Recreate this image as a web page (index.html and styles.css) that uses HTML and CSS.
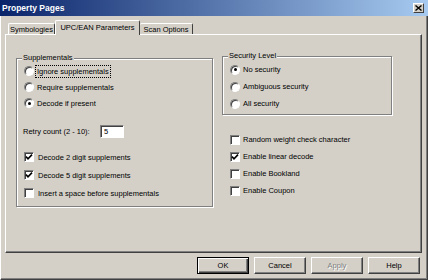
FILE: index.html
```html
<!DOCTYPE html>
<html lang="en">
<head>
    <meta charset="UTF-8">
    <title>Property Pages</title>
    <link rel="stylesheet" href="styles.css">
</head>
<body>
    <div class="window">
        <div class="titlebar">
            <span class="title">Property Pages</span>
            <span class="close-btn">
                <svg width="7" height="6" viewBox="0 0 7 6">
                    <path d="M0.5 0.5 L6.5 5.5 M6.5 0.5 L0.5 5.5" stroke="#000" stroke-width="1.4" fill="none"/>
                </svg>
            </span>
        </div>
        <div class="dialog">
            <div class="tabs">
                <div class="tab tab-symb">Symbologies</div>
                <div class="tab tab-upc active">UPC/EAN Parameters</div>
                <div class="tab tab-scan">Scan Options</div>
            </div>
            <div class="panel">
                <div class="col col-left">
                    <fieldset class="group group-supp">
                        <legend>Supplementals</legend>
                        <div class="row radio-row"><span class="radio"></span><span class="text focus">Ignore supplementals</span></div>
                        <div class="row radio-row"><span class="radio"></span><span class="text">Require supplementals</span></div>
                        <div class="row radio-row"><span class="radio on"></span><span class="text">Decode if present</span></div>
                        <div class="row retry-row">
                            <span class="text">Retry count (2 - 10):</span>
                            <span class="edit">5</span>
                        </div>
                        <div class="row check-row first"><span class="check on"><svg width="8" height="8" viewBox="0 0 8 8"><path d="M1 3.6 L3 5.8 L7 1.6" stroke="#000" stroke-width="1.6" fill="none"/></svg></span><span class="text">Decode 2 digit supplements</span></div>
                        <div class="row check-row"><span class="check on"><svg width="8" height="8" viewBox="0 0 8 8"><path d="M1 3.6 L3 5.8 L7 1.6" stroke="#000" stroke-width="1.6" fill="none"/></svg></span><span class="text">Decode 5 digit supplements</span></div>
                        <div class="row check-row"><span class="check"></span><span class="text">Insert a space before supplementals</span></div>
                    </fieldset>
                </div>
                <div class="col col-right">
                    <fieldset class="group group-sec">
                        <legend>Security Level</legend>
                        <div class="row sec-row"><span class="radio on"></span><span class="text">No security</span></div>
                        <div class="row sec-row"><span class="radio"></span><span class="text">Ambiguous security</span></div>
                        <div class="row sec-row"><span class="radio"></span><span class="text">All security</span></div>
                    </fieldset>
                    <div class="checks">
                        <div class="row opt-row"><span class="check"></span><span class="text">Random weight check character</span></div>
                        <div class="row opt-row"><span class="check on"><svg width="8" height="8" viewBox="0 0 8 8"><path d="M1 3.6 L3 5.8 L7 1.6" stroke="#000" stroke-width="1.6" fill="none"/></svg></span><span class="text">Enable linear decode</span></div>
                        <div class="row opt-row"><span class="check"></span><span class="text">Enable Bookland</span></div>
                        <div class="row opt-row"><span class="check"></span><span class="text">Enable Coupon</span></div>
                    </div>
                </div>
            </div>
            <div class="buttons">
                <button class="btn default">OK</button>
                <button class="btn">Cancel</button>
                <button class="btn disabled">Apply</button>
                <button class="btn">Help</button>
            </div>
        </div>
    </div>
</body>
</html>
```

FILE: styles.css
```css
body {
    margin: 0;
    background: #D4D0C8;
    font-family: "Liberation Sans", Arial, sans-serif;
    font-size: 7.5px;
    color: #000000;
}
.window {
    width: 428px;
    height: 280px;
    box-sizing: border-box;
    display: flex;
    flex-direction: column;
    background: #D4D0C8;
    border-left: 1px solid #ffffff;
    border-right: 1px solid #404040;
    border-bottom: 1px solid #404040;
    box-shadow: inset -1px -1px 0 #808080;
}
.titlebar {
    height: 16px;
    display: flex;
    align-items: center;
    background: linear-gradient(to right, #0A246A, #A6CAF0);
    margin-left: -1px;
    margin-right: -1px;
}
.title {
    flex-grow: 1;
    padding-left: 2px;
    color: #ffffff;
    font-weight: bold;
    font-size: 8.5px;
}
.close-btn {
    width: 11px;
    height: 10px;
    box-sizing: border-box;
    margin-right: 4px;
    display: flex;
    align-items: center;
    justify-content: center;
    background: #D4D0C8;
    border: 1px solid;
    border-color: #ffffff #404040 #404040 #ffffff;
}
.dialog {
    flex-grow: 1;
    display: flex;
    flex-direction: column;
    padding: 4px 5px 0 4px;
}

/* tabs */
.tabs {
    display: flex;
    align-items: flex-end;
    padding-left: 3px;
    height: 14px;
}
.tab {
    height: 11px;
    box-sizing: border-box;
    display: flex;
    align-items: center;
    justify-content: center;
    border-top: 1px solid #ffffff;
    border-left: 1px solid #ffffff;
    border-right: 1px solid #404040;
    border-radius: 2px 2px 0 0;
    white-space: nowrap;
}
.tab-symb { width: 47px; }
.tab-upc { width: 85px; }
.tab-scan { width: 53px; border-left: none; }
.tab.active {
    height: 15px;
    margin-bottom: -1px;
    padding-bottom: 2px;
    background: #D4D0C8;
    position: relative;
    z-index: 1;
}

/* main panel */
.panel {
    height: 219px;
    box-sizing: border-box;
    display: flex;
    gap: 9px;
    padding-left: 10px;
    border-top: 1px solid #ffffff;
    border-left: 1px solid #ffffff;
    border-right: 1px solid #404040;
    border-bottom: 1px solid #404040;
    box-shadow: inset -1px -1px 0 #808080;
}
.col {
    display: flex;
    flex-direction: column;
}
.group {
    margin: 0;
    min-width: 0;
    box-sizing: border-box;
    border: 1px solid #808080;
    box-shadow: inset 1px 1px 0 #ffffff, 1px 1px 0 #ffffff;
}
.group legend {
    padding: 0 1px;
    margin-left: -2px;
    line-height: 10px;
    background: #D4D0C8;
}
.group-supp {
    width: 197px;
    margin-top: 18px;
    padding: 0 6px 4px 7px;
}
.group-sec {
    width: 170px;
    margin-top: 16px;
    padding: 0 6px 2px 7px;
}
.row {
    display: flex;
    align-items: center;
    white-space: nowrap;
}
.radio-row { height: 16px; gap: 3px; }
.sec-row { height: 17px; gap: 3px; }
.check-row { height: 18px; gap: 4px; }
.check-row.first { margin-top: 9px; }
.retry-row {
    height: 16px;
    margin-top: 12px;
    margin-left: -1px;
}
.retry-row .text {
    width: 77px;
}
.checks {
    margin-top: 16px;
    margin-left: 8px;
}
.opt-row { height: 17px; gap: 3px; }

.focus {
    outline: 1px dotted #000000;
    outline-offset: 1px;
}

/* controls */
.radio {
    width: 10px;
    height: 10px;
    box-sizing: border-box;
    border-radius: 50%;
    background: #ffffff;
    border: 1px solid;
    border-color: #808080 #ffffff #ffffff #808080;
    box-shadow: inset 1px 1px 0 #404040;
    display: flex;
    align-items: center;
    justify-content: center;
    flex-shrink: 0;
}
.radio.on::after {
    content: "";
    width: 3px;
    height: 3px;
    border-radius: 50%;
    background: #000000;
}
.check {
    width: 10px;
    height: 10px;
    box-sizing: border-box;
    background: #ffffff;
    border: 1px solid;
    border-color: #808080 #ffffff #ffffff #808080;
    box-shadow: inset 1px 1px 0 #404040;
    display: flex;
    align-items: center;
    justify-content: center;
    flex-shrink: 0;
}
.edit {
    width: 24px;
    height: 13px;
    box-sizing: border-box;
    padding-left: 3px;
    display: flex;
    align-items: center;
    background: #ffffff;
    border: 1px solid;
    border-color: #808080 #ffffff #ffffff #808080;
    box-shadow: inset 1px 1px 0 #404040;
}

/* dialog buttons */
.buttons {
    display: flex;
    justify-content: flex-end;
    gap: 5px;
    padding-top: 4px;
    padding-right: 2px;
}
.btn {
    width: 52px;
    height: 17px;
    padding: 0;
    font-family: "Liberation Sans", Arial, sans-serif;
    font-size: 7.5px;
    color: #000000;
    background: #D4D0C8;
    border: 1px solid;
    border-color: #ffffff #404040 #404040 #ffffff;
    box-shadow: inset -1px -1px 0 #808080;
}
.btn.default {
    border-color: #000000;
    box-shadow: inset 1px 1px 0 #ffffff, inset -1px -1px 0 #404040, inset -2px -2px 0 #808080;
}
.btn.disabled {
    color: #808080;
    text-shadow: 1px 1px 0 #ffffff;
}
```
